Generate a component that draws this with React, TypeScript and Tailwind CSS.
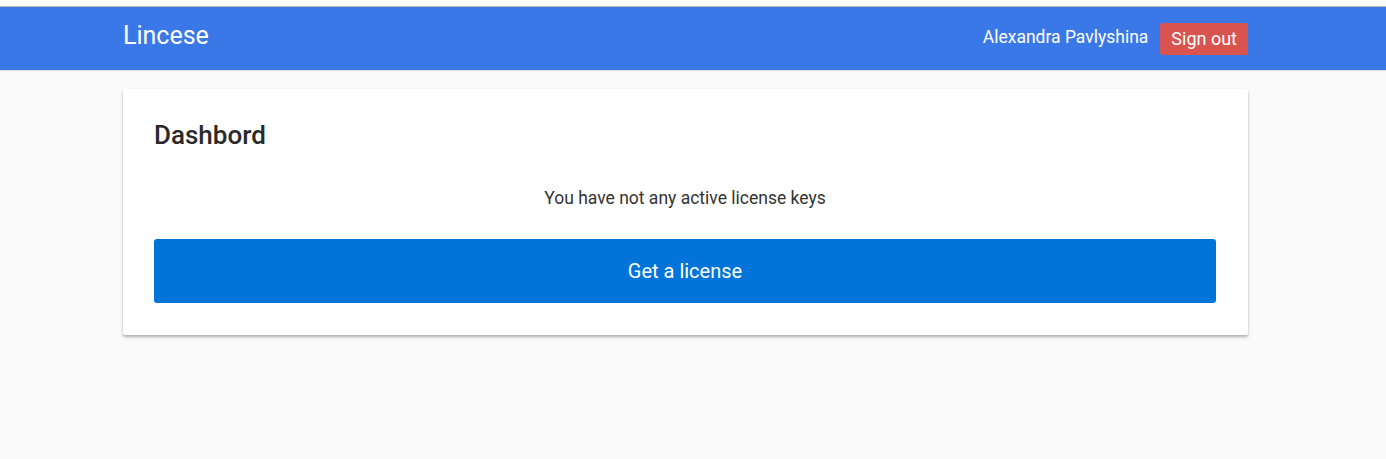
export default function App() {
  return (
    <div className="min-h-[459px] bg-[#fafafa] font-['Roboto',sans-serif]">
      <div className="h-[6px] bg-white" />
      <header className="h-[65px] border-t border-t-[#b5b5b5] border-b border-b-[#e0e0e0] bg-[#3b78e7]">
        <div className="ml-[123px] flex h-full w-[1125px] items-center justify-between">
          <span className="mb-[6px] text-[25px] text-white">Lincese</span>
          <div className="flex items-center gap-[12px]">
            <span className="mb-[2px] text-[17.5px] text-white">Alexandra Pavlyshina</span>
            <button
              type="button"
              className="h-[32px] rounded-[3px] bg-[#d9534f] px-[11px] text-[18px] text-white"
            >
              Sign out
            </button>
          </div>
        </div>
      </header>

      <main className="ml-[123px] mt-[18px] w-[1125px]">
        <section className="rounded-[2px] bg-white pl-[31px] pr-[32px] pt-[30px] pb-[32px] shadow-[0_2px_3px_rgba(0,0,0,0.3)]">
          <h2 className="text-[26px] leading-[32px] font-medium text-[#2a2a2a]">Dashbord</h2>
          <p className="mt-[34px] text-center text-[17.5px] leading-[26px] text-[#333]">You have not any active license keys</p>
          <button
            type="button"
            className="mt-[28px] h-[64px] w-full rounded-[3px] bg-[#0074d9] text-[20px] text-white"
          >
            Get a license
          </button>
        </section>
      </main>
    </div>
  )
}
